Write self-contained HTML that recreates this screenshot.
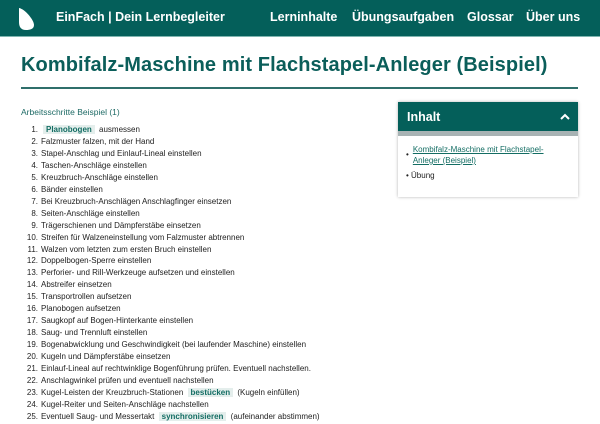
<!DOCTYPE html>
<html><head><meta charset="utf-8"><style>
*{margin:0;padding:0;box-sizing:border-box}
body{width:600px;height:424px;overflow:hidden;background:#fff;font-family:"Liberation Sans",sans-serif;position:relative}
.hdr{position:absolute;left:0;top:0;width:600px;height:37px;background:#045f5a;border-bottom:1px solid #7fb5b0}
.hdr span{position:absolute;top:10px;color:#fff;font-weight:bold;font-size:12.5px;white-space:nowrap}
h1{position:absolute;left:21px;top:54px;font-size:20px;color:#0b5e5a;font-weight:bold;white-space:nowrap;letter-spacing:0.1px}
.rule{position:absolute;left:21px;top:87px;width:557px;height:2px;background:#2f6f6b}
.sub{position:absolute;left:21px;top:107px;font-size:8.5px;color:#1f6b66}
ol{position:absolute;left:41px;top:124px;font-size:8px;color:#222;line-height:11.96px;list-style:none}
ol li{position:relative;white-space:nowrap}
ol li b{position:absolute;right:100%;margin-right:3px;font-weight:normal}
.tag{background:#e4eeec;color:#136d63;font-weight:bold;padding:0 3px;margin:0 2px}
.box{position:absolute;left:398px;top:102px;width:180px;height:95px;box-shadow:0 0 3px rgba(0,0,0,.3);background:#fff}
.bh{height:29px;background:#045f5a;color:#fff;font-weight:bold;font-size:12.5px;padding:8px 9px;position:relative}
.bg{height:5px;background:#a8b3b4}
.bb{font-size:8px;color:#222;padding:8px 0 0 8px;line-height:11px}
.bb a{color:#136d63;text-decoration:underline}
</style></head><body>
<div class="hdr">
<svg style="position:absolute;left:16px;top:7px" width="20" height="24" viewBox="0 0 20 24"><path d="M3 1 C9 2 18 13 18 18 C18 22 14 23 10 23 C5 23 3 20 3 15 Z" fill="#fff"/></svg>
<span style="left:56px">EinFach | Dein Lernbegleiter</span>
<span style="left:270px">Lerninhalte</span>
<span style="left:352px">Übungsaufgaben</span>
<span style="left:467px">Glossar</span>
<span style="left:526px">Über uns</span>
</div>
<h1>Kombifalz-Maschine mit Flachstapel-Anleger (Beispiel)</h1>
<div class="rule"></div>
<div class="sub">Arbeitsschritte Beispiel (1)</div>
<ol>
<li><b>1.</b><span class="tag">Planobogen</span> ausmessen</li>
<li><b>2.</b>Falzmuster falzen, mit der Hand</li>
<li><b>3.</b>Stapel-Anschlag und Einlauf-Lineal einstellen</li>
<li><b>4.</b>Taschen-Anschläge einstellen</li>
<li><b>5.</b>Kreuzbruch-Anschläge einstellen</li>
<li><b>6.</b>Bänder einstellen</li>
<li><b>7.</b>Bei Kreuzbruch-Anschlägen Anschlagfinger einsetzen</li>
<li><b>8.</b>Seiten-Anschläge einstellen</li>
<li><b>9.</b>Trägerschienen und Dämpferstäbe einsetzen</li>
<li><b>10.</b>Streifen für Walzeneinstellung vom Falzmuster abtrennen</li>
<li><b>11.</b>Walzen vom letzten zum ersten Bruch einstellen</li>
<li><b>12.</b>Doppelbogen-Sperre einstellen</li>
<li><b>13.</b>Perforier- und Rill-Werkzeuge aufsetzen und einstellen</li>
<li><b>14.</b>Abstreifer einsetzen</li>
<li><b>15.</b>Transportrollen aufsetzen</li>
<li><b>16.</b>Planobogen aufsetzen</li>
<li><b>17.</b>Saugkopf auf Bogen-Hinterkante einstellen</li>
<li><b>18.</b>Saug- und Trennluft einstellen</li>
<li><b>19.</b>Bogenabwicklung und Geschwindigkeit (bei laufender Maschine) einstellen</li>
<li><b>20.</b>Kugeln und Dämpferstäbe einsetzen</li>
<li><b>21.</b>Einlauf-Lineal auf rechtwinklige Bogenführung prüfen. Eventuell nachstellen.</li>
<li><b>22.</b>Anschlagwinkel prüfen und eventuell nachstellen</li>
<li><b>23.</b>Kugel-Leisten der Kreuzbruch-Stationen <span class="tag">bestücken</span> (Kugeln einfüllen)</li>
<li><b>24.</b>Kugel-Reiter und Seiten-Anschläge nachstellen</li>
<li><b>25.</b>Eventuell Saug- und Messertakt <span class="tag">synchronisieren</span> (aufeinander abstimmen)</li>
</ol>
<div class="box">
<div class="bh">Inhalt<svg style="position:absolute;right:8px;top:11px" width="10" height="7" viewBox="0 0 10 7"><path d="M1 6 L5 2 L9 6" stroke="#fff" stroke-width="2" fill="none"/></svg></div>
<div class="bg"></div>
<div class="bb">
<div style="display:flex"><span style="margin-right:4px;margin-top:5px">•</span><a>Kombifalz-Maschine mit Flachstapel-<br>Anleger (Beispiel)</a></div>
<div style="margin-top:4px">• Übung</div>
</div>
</div>
</body></html>
